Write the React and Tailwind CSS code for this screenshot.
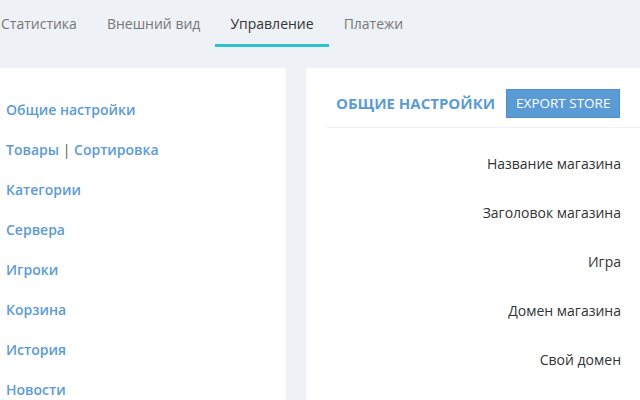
import React from 'react';

const tabs = ['Статистика', 'Внешний вид', 'Управление', 'Платежи'];
const links = ['Категории', 'Сервера', 'Игроки', 'Корзина', 'История', 'Новости'];
const fields = ['Название магазина', 'Заголовок магазина', 'Игра', 'Домен магазина', 'Свой домен'];

export default function App() {
  return (
    <div className="w-[640px] h-[400px] overflow-hidden bg-[#eef1f6] font-['Open_Sans',sans-serif] text-[14px]">
      {/* Tabs */}
      <div className="flex h-[68px] ml-[-14px]">
        {tabs.map((t) => (
          <div key={t} className="relative px-[15px] pt-[13px]">
            <span className={t === 'Управление' ? 'text-[#333]' : 'text-[#777]'}>{t}</span>
            {t === 'Управление' && (
              <div className="absolute left-0 right-0 top-[44px] h-[3px] bg-[#2ec4cf]" />
            )}
          </div>
        ))}
      </div>

      <div className="flex gap-[20px]">
        {/* Sidebar */}
        <div className="w-[286px] h-[332px] bg-white pl-[6px] pt-[30px] font-semibold text-[#5b9bd5]">
          <div className="h-[40px] leading-[24px]">Общие настройки</div>
          <div className="h-[40px] leading-[24px]">
            Товары <span className="text-[#555] font-normal">|</span> Сортировка
          </div>
          {links.map((l) => (
            <div key={l} className="h-[40px] leading-[24px]">{l}</div>
          ))}
        </div>

        {/* Content */}
        <div className="flex-1 h-[332px] bg-white pl-[20px]">
          <div className="flex items-center gap-[11px] pt-[21px] pb-[9px] pl-[10px] border-b border-[#f0f1f3]">
            <span className="font-bold text-[#5b9bd5] text-[15px]">ОБЩИЕ НАСТРОЙКИ</span>
            <span className="bg-[#5b9bd5] border border-[#4f8fcb] text-white px-[9px] h-[29px] leading-[27px] text-[13.5px]">EXPORT STORE</span>
          </div>
          <div className="pt-[24px] pr-[19px] text-right text-[#333]">
            {fields.map((f) => (
              <div key={f} className="h-[49px] leading-[24px]">{f}</div>
            ))}
          </div>
        </div>
      </div>
    </div>
  );
}
